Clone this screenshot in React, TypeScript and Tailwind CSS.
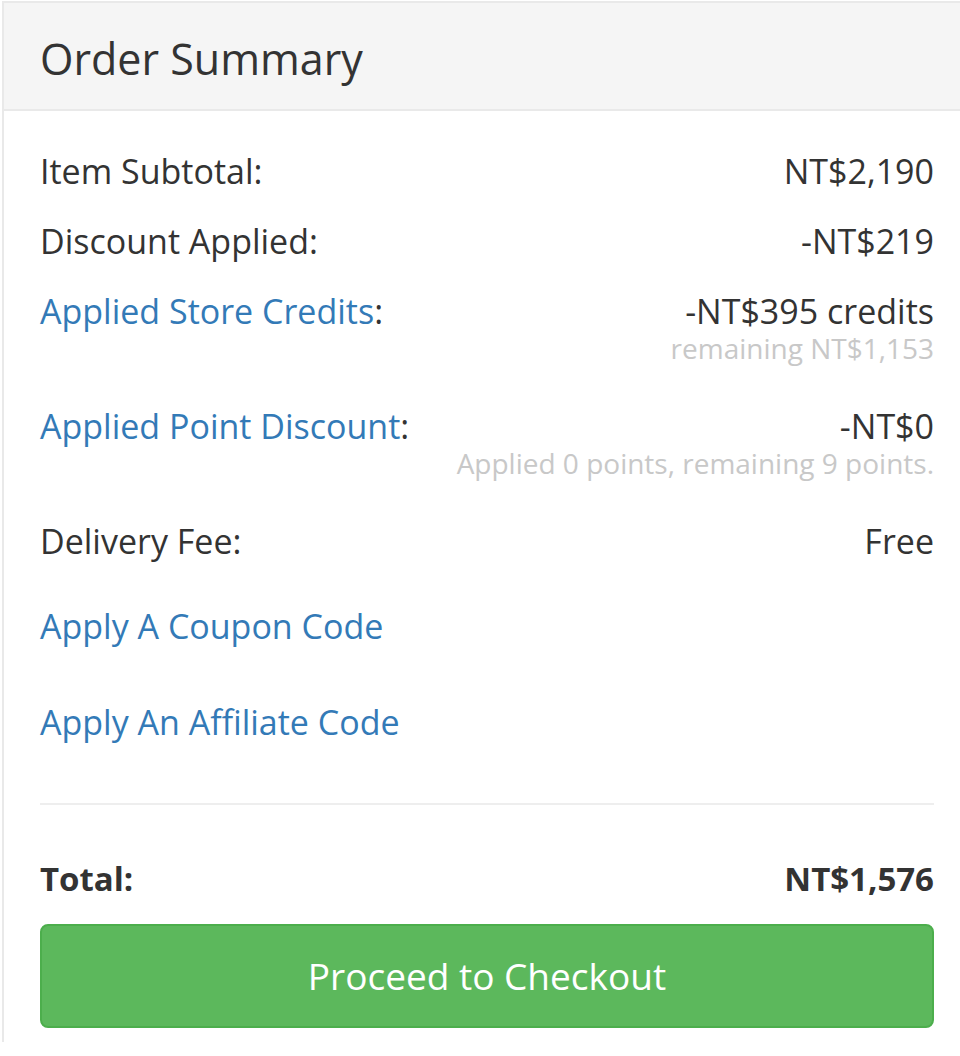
import React from "react"

const fonte = { fontFamily: '"Open Sans", "Liberation Sans", sans-serif' }

type Linha = {
  rotulo: string
  valor: string
  link?: boolean
  nota?: string
}

const linhas: Linha[] = [
  { rotulo: "Item Subtotal", valor: "NT$2,190" },
  { rotulo: "Discount Applied", valor: "-NT$219" },
  { rotulo: "Applied Store Credits", valor: "-NT$395 credits", link: true, nota: "remaining NT$1,153" },
  { rotulo: "Applied Point Discount", valor: "-NT$0", link: true, nota: "Applied 0 points, remaining 9 points." },
  { rotulo: "Delivery Fee", valor: "Free" },
]

function LinhaResumo({ l }: { l: Linha }) {
  return (
    <div className={l.nota ? "mb-[41px]" : "mb-[22px]"}>
      <div className="flex justify-between text-[34px] leading-[48px] text-[#333]">
        <span>
          {l.link ? <a href="#" className="text-[#337ab7]">{l.rotulo}</a> : l.rotulo}:
        </span>
        <span>{l.valor}</span>
      </div>
      {l.nota && (
        <div className="text-right text-[28px] leading-[26px] text-[#c8c8c8]">{l.nota}</div>
      )}
    </div>
  )
}

export default function App() {
  return (
    <div className="w-[960px] h-[1056px] overflow-hidden bg-white pt-[1px] pl-[2px]" style={fonte}>
      <div className="w-[968px] h-[1041px] border-l-2 border-t-2 border-[#e9e9e9]">
        <div className="h-[108px] bg-[#f5f5f5] border-b-2 border-[#e9e9e9] pl-[36px] pt-[34px]">
          <h3 className="text-[43px] leading-[43px] text-[#333]">Order Summary</h3>
        </div>

        <div className="pl-[36px] pr-[36px] pt-[36px]">
          {linhas.map(l => <LinhaResumo key={l.rotulo} l={l} />)}

          <div className="flex flex-col gap-[48px] mt-[37px]">
            <a href="#" className="text-[34px] leading-[48px] text-[#337ab7]">Apply A Coupon Code</a>
            <a href="#" className="text-[34px] leading-[48px] text-[#337ab7]">Apply An Affiliate Code</a>
          </div>

          <hr className="mt-[57px] border-t-2 border-[#eeeeee]" />

          <div className="mt-[50px] flex justify-between text-[33px] leading-[48px] font-bold text-[#333]">
            <span>Total:</span>
            <span>NT$1,576</span>
          </div>

          <button className="mt-[21px] w-full h-[104px] rounded-lg bg-[#5cb85c] border-2 border-[#4cae4c] text-white text-[37px]">
            Proceed to Checkout
          </button>
        </div>
      </div>
    </div>
  )
}
